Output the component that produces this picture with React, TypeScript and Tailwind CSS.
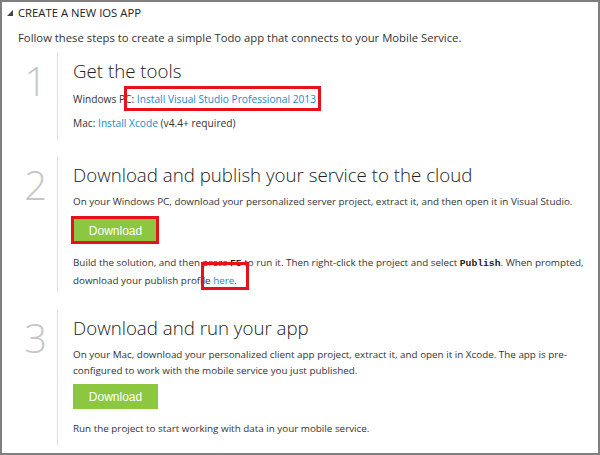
import type { ReactNode } from 'react'

const font = { fontFamily: '"Open Sans", "Noto Sans", sans-serif' }

function Step({ n, title, children, className }: { n: string; title: string; children: ReactNode; className?: string }) {
  return (
    <div className={'flex ' + (className ?? '')}>
      <div className="w-[55px] shrink-0 pr-[10px] pt-[4px] text-right text-[40px] font-light leading-[48px] text-[#c6c6c6]">{n}</div>
      <div className="flex-1 border-l border-[#dcdcdc] pl-[15px] pt-[4px] text-[9.85px]">
        <h2 className="text-[18.7px] font-light leading-[28px] text-[#222]">{title}</h2>
        {children}
      </div>
    </div>
  )
}

function DownloadButton() {
  return (
    <button
      className="h-[25px] w-[85px] bg-[#8dc63f] text-[12px] text-white"
      style={{ fontFamily: '"Liberation Sans", Arial, sans-serif' }}
    >
      Download
    </button>
  )
}

const link = 'text-[#1c87cf]'
const code = 'font-bold text-[9.7px] text-[#222]'
const mono = { fontFamily: '"Liberation Mono", monospace' }

export default function App() {
  return (
    <div className="relative h-[455px] w-[600px] overflow-hidden border-2 border-[#7f7f7f] bg-white text-[11.3px] text-[#333]" style={font}>
      <div className="flex h-[22px] items-center gap-[5px] pl-[5px]">
        <svg width="6" height="6" viewBox="0 0 6 6">
          <polygon points="6,0 6,6 0,6" fill="#444" />
        </svg>
        <span className="text-[11.3px] uppercase text-[#222]">Create a new iOS app</span>
      </div>
      <p className="mt-[6px] pl-[16px] leading-[16px]">
        Follow these steps to create a simple Todo app that connects to your Mobile Service.
      </p>

      <div className="mt-[7px]">
        <Step n="1" title="Get the tools" className="h-[87px]">
          <p className="mt-[6px] text-[10.2px] leading-[16px]">
            Windows PC: <a className={link}>Install Visual Studio Professional 2013</a>
          </p>
          <p className="mt-[8px] text-[10.2px] leading-[16px]">
            Mac: <a className={link}>Install Xcode</a> (v4.4+ required)
          </p>
        </Step>

        <Step n="2" title="Download and publish your service to the cloud" className="mt-[17px] h-[135px]">
          <p className="mt-[4px] leading-[16px]">
            On your Windows PC, download your personalized server project, extract it, and then open it in Visual Studio.
          </p>
          <div className="relative mt-[9px] w-[85px]">
            <DownloadButton />
            <div className="absolute -left-[2px] -top-[2px] h-[28px] w-[88px] border-[3px] border-[#e8101a]" />
          </div>
          <p className="mt-[11px] leading-[16px]">
            <span className="whitespace-nowrap">
              Build the solution, and then press <span className={code} style={mono}>F5</span> to run it. Then right-click the project and select{' '}
              <span className={code} style={mono}>Publish</span>. When prompted,
            </span>
            <br />
            download your publish profile <a className={link}>here</a>.
          </p>
        </Step>

        <Step n="3" title="Download and run your app" className="mt-[18px] h-[135px]">
          <p className="mt-[4px] leading-[16px]">
            On your Mac, download your personalized client app project, extract it, and open it in Xcode. The app is pre-
            <br />
            configured to work with the mobile service you just published.
          </p>
          <div className="mt-[6px]">
            <DownloadButton />
          </div>
          <p className="mt-[11px] leading-[16px]">Run the project to start working with data in your mobile service.</p>
        </Step>
      </div>

      <div className="pointer-events-none absolute left-[122px] top-[84px] h-[25px] w-[197px] border-[3px] border-[#e8101a]" />
      <div className="pointer-events-none absolute left-[199px] top-[260px] h-[28px] w-[48px] border-[3px] border-[#e8101a]" />
    </div>
  )
}
